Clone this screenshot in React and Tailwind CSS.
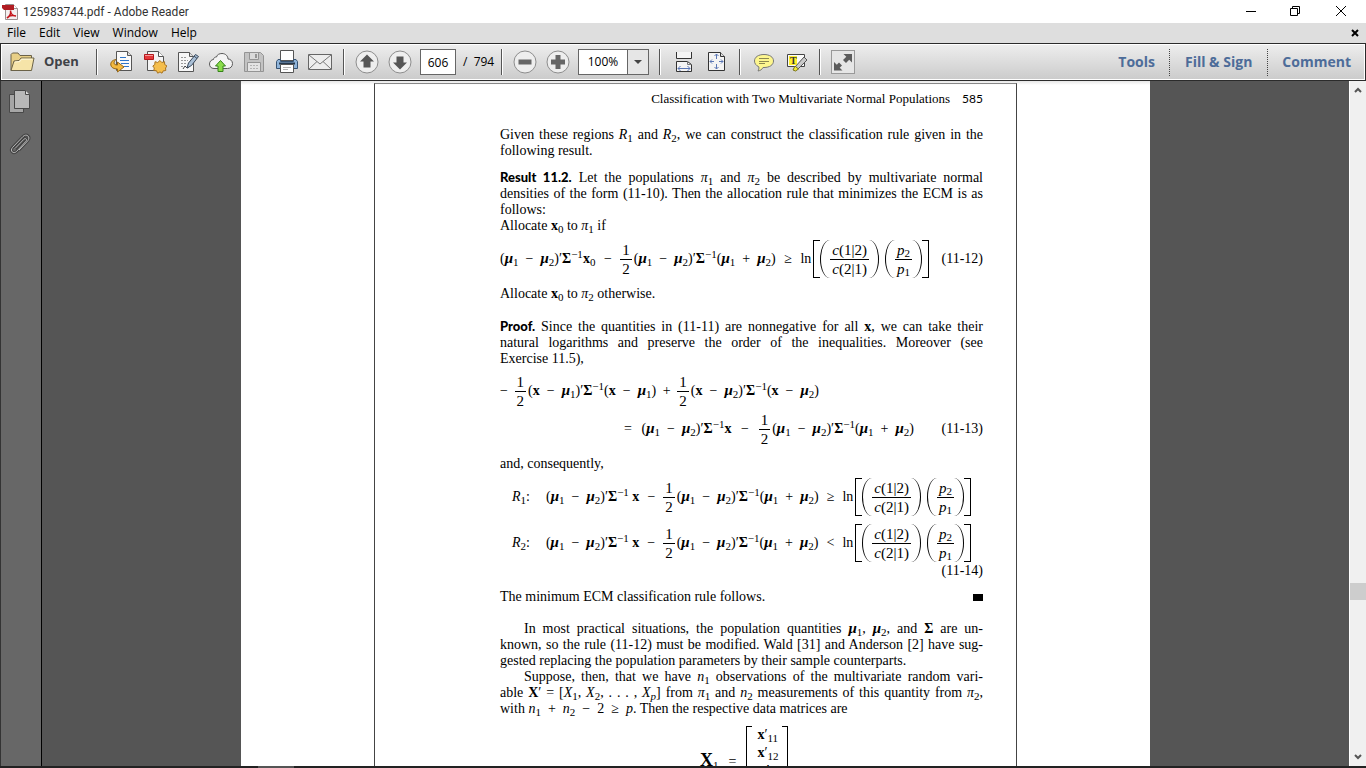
import { useState } from 'react';

const menus = ['File', 'Edit', 'View', 'Window', 'Help'];

function Svg({ children, size = 24 }) {
  return (
    <svg width={size} height={size} viewBox={`0 0 ${size} ${size}`} fill="none" aria-hidden="true">
      {children}
    </svg>
  );
}

function PdfIcon() {
  return (
    <svg width="16" height="16" viewBox="0 0 16 16" fill="none" aria-hidden="true">
      <path d="M3.500.5h8l4 4v11h-12z" fill="#f3f0f0" stroke="#9a8f8f" />
      <path d="M11.500.5v4h4" fill="#fff" stroke="#9a8f8f" />
      <path d="M0 1h12v5H2L0 4z" fill="#b01c22" />
      <path d="M5 14c2-1 4-4 3.600-7.500M8.500 7c.5 3 2.500 5 5.500 5M5 14c1-2 5-3 9-2" stroke="#c4161c" strokeWidth="1.500" />
    </svg>
  );
}

function FolderIcon() {
  return (
    <svg width="25" height="20" viewBox="0 0 25 20" fill="none" aria-hidden="true">
      <path d="M1 18.500V2.500L2.500 1H8l2 2.500h11.500V8" fill="#e8cf86" stroke="#6b6248" />
      <path d="M1 18.500 4 9l5-.5 2-2.500h13l-2.500 12.500z" fill="#f6e4a8" stroke="#6b6248" strokeLinejoin="round" />
      <path d="M5 10l5-.5 1.500-2.300h11" stroke="#fff8dc" />
    </svg>
  );
}

const icons = {
  convert: (
    <Svg>
      <path d="M6.500 1.500h11l4 4v15h-15z" fill="#fafafa" stroke="#555" />
      <path d="M17.500 1.500v4h4" fill="#ddd" stroke="#555" />
      <path d="M10 7.500h6M10 10.500h9M11 13.500h8M12 16.500h7" stroke="#2e75c9" />
      <path d="M6 9.500C2.500 10 .5 12 .8 15c.3 2.500 3 4 6.700 4v3l6.500-5-6.500-5v3c-2 0-3.500-.5-3.500-2 0-1.300.8-2.300 2-3.500z" fill="#f3b93f" stroke="#96681a" />
    </Svg>
  ),
  create: (
    <Svg>
      <path d="M4.500 1.500h11l5 5v14h-16z" fill="#f4f4f4" stroke="#555" />
      <path d="M15.500 1.500v5h5" fill="#fff" stroke="#555" />
      <path d="M1.500 4.500h9v5h-9z" fill="#e5383b" stroke="#b3181c" />
      <path d="M2 5.500h8" stroke="#f59a9a" />
      <path d="m17 10.500 1.800 2 2.700-.8.200 2.800 2.300 1.500-1.500 2 .3 2.500-2.600.4-1.200 2.300-2-1.300-2.300 1.300-1.200-2.400-2.700-.3.500-2.500-1.500-2 2-1.500.2-2.800 2.700.8z" fill="#f5be4c" stroke="#a87422" />
    </Svg>
  ),
  edit: (
    <Svg>
      <path d="M2.500 2.500h11l4 4v15h-15z" fill="#f7f7f7" stroke="#555" />
      <path d="M13.500 2.500v4h4" fill="#ddd" stroke="#555" />
      <path d="M5 7.500h6M5 10.500h7M5 13.500h5M5 16.500h3" stroke="#999" strokeDasharray="2 1" />
      <path d="m7 19 2-3 2 2 2-1" stroke="#444" />
      <path d="m11 18 1.500-5 7-8.500 3 2-7 9z" fill="#a9bfd6" stroke="#39485a" />
      <path d="m18 6 3 2.500" stroke="#39485a" />
    </Svg>
  ),
  cloud: (
    <Svg>
      <path d="M5 18.500c-3 0-4.500-2-4.500-4.500s2-4.500 4-4.500c0-1.500 1.500-2.700 3-2.500C8 4.500 10.500 3.500 13 3.500c3.500 0 6 2.500 6 5.500 2.500 0 4.500 2 4.500 4.500 0 3-2 5-5 5z" fill="#f4f4f4" stroke="#5a5a5a" />
      <path d="m11.500 10.500 5 5.500h-2.500v5.500h-5V16H6.500z" fill="#8bdc4b" stroke="#35831a" />
    </Svg>
  ),
  save: (
    <Svg>
      <path d="M2.500 2.500h16l3 3v16h-19z" fill="#c3c3c3" stroke="#949494" />
      <path d="M7.500 2.500h9v7h-9z" fill="#dadada" stroke="#949494" />
      <path d="M13 4h2v4h-2z" fill="#949494" />
      <path d="M5.500 12.500h13v9h-13z" fill="#e4e4e4" stroke="#949494" />
      <path d="M8 15.500h8M8 18.500h8" stroke="#b4b4b4" strokeDasharray="2 1" />
    </Svg>
  ),
  print: (
    <Svg>
      <path d="M5.500.5h13v10h-13z" fill="#fff" stroke="#555" />
      <path d="M3 9.500h2.500v2h13v-2H21l1.500 2v7h-21v-7z" fill="#8fb4da" stroke="#355272" />
      <path d="M4 13.500h16" stroke="#26384c" strokeWidth="2" />
      <path d="M5.500 14.500h13v8h-13z" fill="#fff" stroke="#555" />
      <path d="M8 17.500h8M8 19.500h5" stroke="#b5b5b5" />
    </Svg>
  ),
  mail: (
    <Svg>
      <path d="M.5 4.500h23v15H.5z" fill="#ededed" stroke="#666" />
      <path d="m1 5 11 9L23 5M1 19l8-7.500M23 19l-8-7.500" stroke="#777" />
    </Svg>
  ),
  up: (
    <Svg>
      <circle cx="12" cy="12" r="11" fill="#eee" stroke="#8d8d8d" />
      <path d="m12 4.500 7 7h-3.500v6h-7v-6H5z" fill="#555" />
    </Svg>
  ),
  down: (
    <Svg>
      <circle cx="12" cy="12" r="11" fill="#eee" stroke="#8d8d8d" />
      <path d="m12 19.500-7-7h3.500v-6h7v6H19z" fill="#555" />
    </Svg>
  ),
  minus: (
    <Svg>
      <circle cx="12" cy="12" r="11" fill="#eee" stroke="#8d8d8d" />
      <path d="M5.500 9.500h13v5h-13z" fill="#666" />
    </Svg>
  ),
  plus: (
    <Svg>
      <circle cx="12" cy="12" r="11" fill="#eee" stroke="#8d8d8d" />
      <path d="M9.500 5h5v4.500H19v5h-4.500V19h-5v-4.500H5v-5h4.500z" fill="#666" />
    </Svg>
  ),
  fitWidth: (
    <Svg>
      <path d="M4.500 2v6.500h15V2" fill="#f4f4f4" stroke="#333" />
      <path d="M4.500 21.500v-10h11l4 3v7z" fill="#f4f4f4" stroke="#333" />
      <path d="M15.500 11.500v3h4" stroke="#777" />
      <path d="M6 18.500h12M8.500 16 6 18.500 8.500 21M15.500 16l2.500 2.500-2.500 2.500" stroke="#5b77b5" />
    </Svg>
  ),
  fitPage: (
    <Svg>
      <path d="M3.500 2.500h12l4 4v14h-16z" fill="#f4f4f4" stroke="#333" />
      <path d="M15.500 2.500v4h4" fill="#ddd" stroke="#333" />
      <path d="M11.500 4v5M11.500 14v5M5 11.500h4M14 11.500h4M9.500 6l2-2 2 2M9.500 17l2 2 2-2M7 9.500l-2 2 2 2M16 9.500l2 2-2 2" stroke="#5b77b5" />
    </Svg>
  ),
  comment: (
    <Svg>
      <path d="M12 4.500c5.500 0 9.500 2.500 9.500 6.500s-4 6.500-9.500 6.500H11c-1 2-2.500 3-5 3.500 1-1.500 1-2.500.8-4.200C4 15.500 2.500 13.500 2.500 11c0-4 4-6.500 9.500-6.500z" fill="#fdf68e" stroke="#777" />
      <path d="M7 8.500h10M7 11.500h10M7 13.500h6" stroke="#8c8750" />
    </Svg>
  ),
  highlight: (
    <Svg>
      <path d="M2.500 4.500h17v12h-17z" fill="#fafafa" stroke="#444" />
      <path d="M4 6h8v9H4z" fill="#fff02a" />
      <text x="5" y="14" fontFamily="Liberation Serif, serif" fontWeight="700" fontSize="10" fill="#333">T</text>
      <path d="m10 17 9-10 3 3-9 9z" fill="#c9c9c9" stroke="#555" />
      <path d="m8 20 2-4 3.500 3-3 2z" fill="#f3ea32" stroke="#77721d" />
    </Svg>
  ),
};

function IconButton({ icon, label }) {
  return (
    <button type="button" aria-label={label} className="flex h-7 w-[33px] shrink-0 items-center justify-center">
      {icons[icon]}
    </button>
  );
}

function Sep() {
  return <div className="h-[26px] w-[2px] shrink-0 border-l border-r border-l-[#555] border-r-white" />;
}

function PaneButton({ children }) {
  return (
    <button type="button" className="h-[27px] px-[14px] text-sm font-bold text-[#4d6c99]">
      {children}
    </button>
  );
}

// ---- math helpers ----

function Sub({ children }) {
  return <sub className="text-[11px] font-normal not-italic">{children}</sub>;
}

function Mu({ n }) {
  return (
    <span>
      <b className="text-[15px] leading-none italic">μ</b>
      <Sub>{n}</Sub>
    </span>
  );
}

function Pi({ n }) {
  return (
    <span>
      <i>π</i>
      <Sub>{n}</Sub>
    </span>
  );
}

function Op({ children }) {
  return <span className="mx-[7px]">{children}</span>;
}

function SigmaInv() {
  return (
    <span>
      ′<b>Σ</b>
      <sup className="text-[11px]">−1</sup>
    </span>
  );
}

function Frac({ top, bottom }) {
  return (
    <span className="inline-flex flex-col items-center text-[15px] leading-[18px]">
      <span className="px-[2px]">{top}</span>
      <span className="w-full border-t border-black px-[2px] text-center">{bottom}</span>
    </span>
  );
}

// one half, set tight against the group it multiplies
function Half({ children }) {
  return (
    <span className="flex items-center">
      <Frac top="1" bottom="2" />
      <span className="pl-[2px]">{children}</span>
    </span>
  );
}

function Paren({ children }) {
  return (
    <span className="flex items-center">
      <span className="h-[38px] w-[10px] rounded-l-[100%_50%] border-l border-black" />
      {children}
      <span className="h-[38px] w-[10px] rounded-r-[100%_50%] border-r border-black" />
    </span>
  );
}

function Ratio() {
  return (
    <span className="flex items-center">
      <span className="pr-[2px]">ln</span>
      <span className="h-[38px] w-[7px] border-y border-l border-black" />
      <Paren>
        <Frac top={<><i>c</i>(1|2)</>} bottom={<><i>c</i>(2|1)</>} />
      </Paren>
      <span className="w-[6px]" />
      <Paren>
        <Frac top={<><i>p</i><Sub>2</Sub></>} bottom={<><i>p</i><Sub>1</Sub></>} />
      </Paren>
      <span className="h-[38px] w-[7px] border-y border-r border-black" />
    </span>
  );
}

function Diff() {
  return <span>(<Mu n="1" /><Op>−</Op><Mu n="2" />)</span>;
}

function XDiff({ n }) {
  return (
    <span>
      (<b>x</b><Op>−</Op><Mu n={n} />)<SigmaInv />(<b>x</b><Op>−</Op><Mu n={n} />)
    </span>
  );
}

function Rule({ x, op }) {
  return (
    <>
      <span><Diff /><SigmaInv />{x}</span>
      <span>−</span>
      <Half><Diff /><SigmaInv />(<Mu n="1" /><Op>+</Op><Mu n="2" />)</Half>
      {op && <span>{op}</span>}
    </>
  );
}

function Full({ children, indent }) {
  return (
    <span className={indent ? 'block pl-6 [text-align-last:justify]' : 'block [text-align-last:justify]'}>
      {children}
    </span>
  );
}

function Line({ children }) {
  return <span className="block">{children}</span>;
}

function PdfText() {
  return (
    <article className="pt-[7px] pr-[33px] pl-[125px] font-['Liberation_Serif',serif] text-sm leading-4 text-black">
      <header className="flex justify-end gap-3 text-[13px] leading-4">
        <span>Classification with Two Multivariate Normal Populations</span>
        <span className="font-['Lato',sans-serif] text-xs leading-4">585</span>
      </header>

      <p className="mt-5">
        <Full>Given these regions <i>R</i><Sub>1</Sub> and <i>R</i><Sub>2</Sub>, we can construct the classification rule given in the</Full>
        <Line>following result.</Line>
      </p>

      <p className="mt-[10px]">
        <Full>
          <b className="font-['Lato',sans-serif] text-[13px] font-black">Result 11.2.</b> Let the populations <Pi n="1" /> and <Pi n="2" /> be described by multivariate normal
        </Full>
        <Full>densities of the form (11-10). Then the allocation rule that minimizes the ECM is as</Full>
        <Line>follows:</Line>
        <Line>Allocate <b>x</b><Sub>0</Sub> to <Pi n="1" /> if</Line>
      </p>

      <div className="mt-[5px] flex h-10 items-center justify-between whitespace-nowrap">
        <Rule x={<><b>x</b><Sub>0</Sub></>} op="≥" />
        <Ratio />
        <span className="pl-1">(11-12)</span>
      </div>

      <p className="mt-[7px]">Allocate <b>x</b><Sub>0</Sub> to <Pi n="2" /> otherwise.</p>

      <p className="mt-4">
        <Full>
          <b className="font-['Lato',sans-serif] text-[13px] font-black">Proof.</b> Since the quantities in (11-11) are nonnegative for all <b>x</b>, we can take their
        </Full>
        <Full>natural logarithms and preserve the order of the inequalities. Moreover (see</Full>
        <Line>Exercise 11.5),</Line>
      </p>

      <div className="mt-2 flex h-8 w-[319px] items-center justify-between whitespace-nowrap">
        <span>−</span>
        <Half><XDiff n="1" /></Half>
        <span>+</span>
        <Half><XDiff n="2" /></Half>
      </div>

      <div className="mt-[6px] flex h-8 items-center justify-between whitespace-nowrap">
        <div className="ml-[124px] flex w-[290px] items-center justify-between">
          <span>=</span>
          <Rule x={<b>x</b>} />
        </div>
        <span>(11-13)</span>
      </div>

      <p className="mt-[11px]">and, consequently,</p>

      <div className="mt-[5px] mr-3 ml-3 flex h-10 items-center justify-between whitespace-nowrap">
        <span className="pr-2"><i>R</i><Sub>1</Sub>:</span>
        <Rule x={<b> x</b>} op="≥" />
        <Ratio />
      </div>
      <div className="mt-[6px] mr-3 ml-3 flex h-10 items-center justify-between whitespace-nowrap">
        <span className="pr-2"><i>R</i><Sub>2</Sub>:</span>
        <Rule x={<b> x</b>} op="<" />
        <Ratio />
      </div>
      <p className="text-right">(11-14)</p>

      <p className="mt-[10px] flex items-center justify-between">
        The minimum ECM classification rule follows.
        <span className="h-[7px] w-[10px] bg-black" />
      </p>

      <p className="mt-4">
        <Full indent>In most practical situations, the population quantities <Mu n="1" />, <Mu n="2" />, and <b>Σ</b> are un-</Full>
        <Full>known, so the rule (11-12) must be modified. Wald [31] and Anderson [2] have sug-</Full>
        <Line>gested replacing the population parameters by their sample counterparts.</Line>
        <Full indent>Suppose, then, that we have <i>n</i><Sub>1</Sub> observations of the multivariate random vari-</Full>
        <Full>
          able <b>X</b>′ = [<i>X</i><Sub>1</Sub>, <i>X</i><Sub>2</Sub>, . . . , <i>X</i><Sub><i>p</i></Sub>] from <Pi n="1" /> and <i>n</i><Sub>2</Sub> measurements of this quantity from <Pi n="2" />,
        </Full>
        <Line>with <i>n</i><Sub>1</Sub><Op>+</Op><i>n</i><Sub>2</Sub><Op>−</Op>2<Op>≥</Op><i>p</i>. Then the respective data matrices are</Line>
      </p>

      <div className="mt-[9px] ml-[200px] flex items-start">
        <span className="pt-6 text-lg leading-5 font-bold">X<Sub>1</Sub></span>
        <span className="pt-[26px] pr-[10px] pl-[10px] leading-5">=</span>
        <span className="h-20 w-[6px] border-y border-l border-black" />
        <span className="flex flex-col pr-1 pl-[5px] leading-[18px]">
          <span><b>x</b>′<Sub>11</Sub></span>
          <span><b>x</b>′<Sub>12</Sub></span>
          <span className="text-center">⋮</span>
        </span>
        <span className="h-20 w-[6px] border-y border-r border-black" />
      </div>
    </article>
  );
}

export default function App() {
  const [page, setPage] = useState('606');
  const [zoom, setZoom] = useState('100%');

  return (
    <div className="flex h-screen flex-col overflow-hidden bg-white font-['Open_Sans','Noto_Sans',sans-serif] text-xs text-black">
      {/* title bar */}
      <div className="flex h-[23px] shrink-0 items-center pr-[3px] pl-[2px]">
        <PdfIcon />
        <h1 className="pl-[5px] font-['Roboto',sans-serif] text-[#333]">125983744.pdf - Adobe Reader</h1>
        <div className="ml-auto flex">
          <button type="button" aria-label="Minimize" className="flex h-5 w-[45px] items-center justify-center">
            <Svg size={12}><path d="M1 5.500h10" stroke="#000" /></Svg>
          </button>
          <button type="button" aria-label="Restore" className="flex h-5 w-[45px] items-center justify-center">
            <Svg size={12}><path d="M.5 2.500h7v7h-7zM2.500 2.500v-2h7v7h-2" stroke="#000" /></Svg>
          </button>
          <button type="button" aria-label="Close" className="flex h-5 w-[45px] items-center justify-center">
            <Svg size={12}><path d="m1 0 10 10M11 0 1 10" stroke="#000" /></Svg>
          </button>
        </div>
      </div>

      {/* menu bar */}
      <nav className="flex h-5 shrink-0 items-center gap-[13px] bg-[#dedede] px-[7px]">
        {menus.map((m) => (
          <button key={m} type="button">{m}</button>
        ))}
        <button type="button" aria-label="Close document" className="ml-auto">
          <Svg size={8}><path d="m1 1 6 6M7 1 1 7" stroke="#000" strokeWidth="2" /></Svg>
        </button>
      </nav>

      {/* toolbar */}
      <div className="flex h-[38px] shrink-0 items-center border border-[#2b2b2b] bg-linear-to-b from-[#eeeeee] to-[#cbcbcb] pl-[9px] inset-ring inset-ring-white">
        <button type="button" className="flex w-[86px] shrink-0 items-center gap-[9px] text-[13px] font-bold text-[#3f4247]">
          <FolderIcon />
          Open
        </button>
        <Sep />
        <div className="flex px-[7px]">
          <IconButton icon="convert" label="Convert PDF" />
          <IconButton icon="create" label="Create PDF" />
          <IconButton icon="edit" label="Edit PDF" />
          <IconButton icon="cloud" label="Upload" />
          <IconButton icon="save" label="Save" />
          <IconButton icon="print" label="Print" />
          <IconButton icon="mail" label="Email" />
        </div>
        <Sep />
        <div className="flex items-center pr-2 pl-[5px]">
          <IconButton icon="up" label="Previous page" />
          <IconButton icon="down" label="Next page" />
          <input
            aria-label="Page number"
            value={page}
            onChange={(e) => setPage(e.target.value)}
            className="ml-1 h-[26px] w-9 border border-[#666] bg-white text-center"
          />
          <span className="w-[37px] pl-[7px] whitespace-pre">/  794</span>
        </div>
        <Sep />
        <div className="flex items-center pr-[10px] pl-[5px]">
          <IconButton icon="minus" label="Zoom out" />
          <IconButton icon="plus" label="Zoom in" />
          <div className="ml-1 flex h-[26px] w-[71px] border border-[#666] bg-white">
            <input
              aria-label="Zoom level"
              value={zoom}
              onChange={(e) => setZoom(e.target.value)}
              className="w-12 text-center"
            />
            <button type="button" aria-label="Zoom presets" className="flex flex-1 items-center justify-center border-l border-[#666] bg-[#e6e6e6]">
              <Svg size={8}><path d="M0 2h8L4 6z" fill="#444" /></Svg>
            </button>
          </div>
        </div>
        <Sep />
        <div className="flex px-[6px]">
          <IconButton icon="fitWidth" label="Fit width" />
          <IconButton icon="fitPage" label="Fit page" />
        </div>
        <Sep />
        <div className="flex px-[6px]">
          <IconButton icon="comment" label="Add comment" />
          <IconButton icon="highlight" label="Highlight text" />
        </div>
        <Sep />
        <button type="button" aria-label="Read mode" className="ml-[10px] shrink-0 border border-[#999] bg-[#e6e6e6]">
          <Svg size={22}>
            <path d="M11.500 3H20v8.500l-2.800-2.800-3.200 3.200-3-3L14.300 5.800zM10.500 19.500H2V11l2.800 2.800L7 11.500l3 3-2.300 2.200z" fill="#5c5c5c" />
          </Svg>
        </button>
        <div className="ml-auto flex">
          <PaneButton>Tools</PaneButton>
          <div className="mr-px border-l border-dotted border-[#444]" />
          <PaneButton>Fill &amp; Sign</PaneButton>
          <div className="ml-px border-l border-dotted border-[#444]" />
          <PaneButton>Comment</PaneButton>
        </div>
      </div>

      {/* work area */}
      <div className="flex min-h-0 flex-1">
        <aside className="flex w-[42px] shrink-0 flex-col items-center gap-[19px] border-r border-l border-r-black border-l-[#333] bg-[#676767] pt-2 pr-1">
          <button type="button" aria-label="Page thumbnails">
            <Svg>
              <path d="M2.500 5.500h14v18h-14z" fill="#a6a6a6" stroke="#484848" />
              <path d="M7.500 1.500h11l4 4v14h-15z" fill="#b8b8b8" stroke="#484848" />
              <path d="M18.500 1.500v4h4" fill="#ddd" stroke="#484848" />
            </Svg>
          </button>
          <button type="button" aria-label="Attachments">
            <Svg>
              <path d="M8 16.500 17 7.200c1.500-1.500 3.500.2 2 2L9.500 19.500c-3 3-7-.5-4-4L16 4.500c3.500-3.500 8 .5 4.800 4.300L12 18" stroke="#454545" strokeWidth="3" />
              <path d="M8 16.500 17 7.200c1.500-1.500 3.500.2 2 2L9.500 19.500c-3 3-7-.5-4-4L16 4.500c3.500-3.500 8 .5 4.800 4.300L12 18" stroke="#b8b8b8" />
            </Svg>
          </button>
        </aside>
        <main className="flex min-w-0 flex-1 justify-center overflow-hidden bg-[#555555]">
          <div className="w-full max-w-[909px] bg-white bg-linear-to-b from-[#e6e6e6] to-white to-[4px] pt-[2px]">
            <div className="mx-auto h-full w-[643px] overflow-hidden border-x border-t border-x-[#444] border-t-[#888]">
              <PdfText />
            </div>
          </div>
        </main>
        <div className="flex w-[17px] shrink-0 flex-col items-center border-l border-white bg-[#f0f0f0] py-[5px]">
          <Svg size={8}><path d="m1 6 3-3 3 3" stroke="#555" strokeWidth="2" /></Svg>
          <div className="flex-[489]" />
          <div className="h-[17px] w-full bg-[#cdcdcd]" />
          <div className="flex-[153]" />
          <Svg size={8}><path d="m1 2 3 3 3-3" stroke="#555" strokeWidth="2" /></Svg>
        </div>
      </div>
      <div className="h-[2px] shrink-0 bg-[#222222] pl-[258px]">
        <div className="h-full w-9 bg-[#555555]" />
      </div>
    </div>
  );
}
